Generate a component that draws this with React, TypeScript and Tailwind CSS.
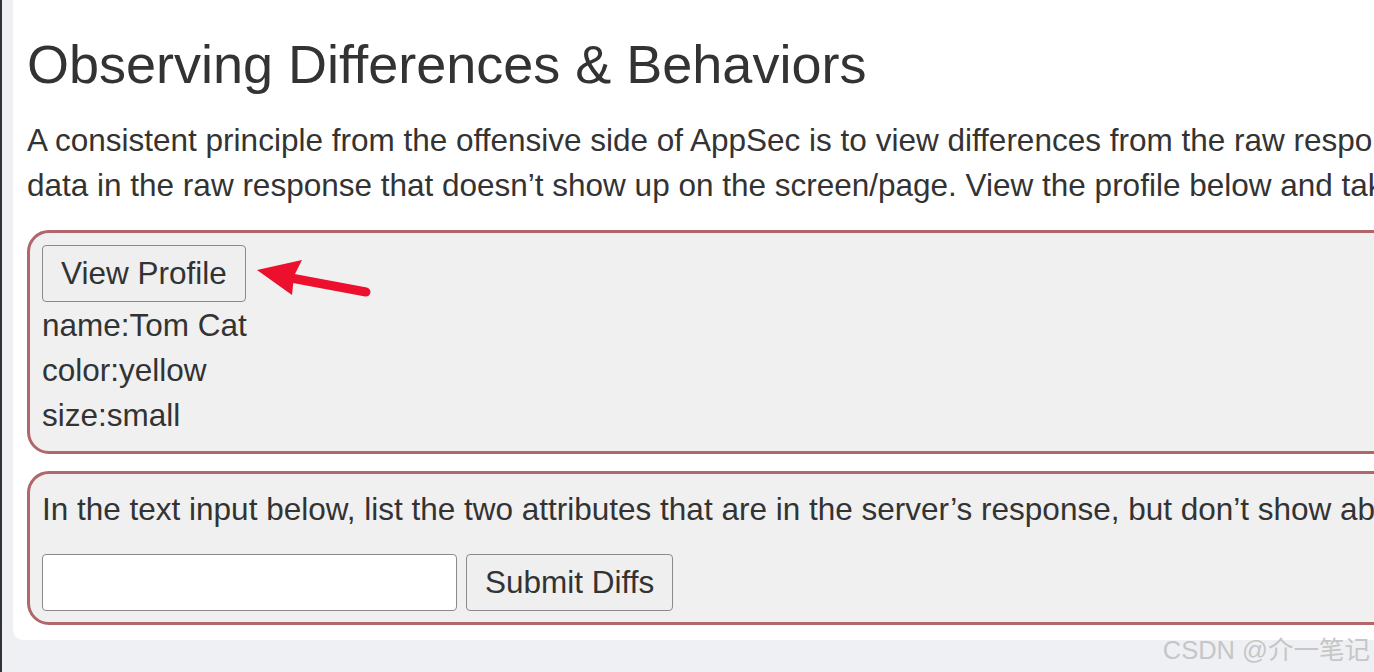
import React from "react";

export default function App() {
  return (
    <div
      className="relative flex h-[672px] w-[1374px] overflow-hidden bg-[#eff0f4] text-[#333333]"
      style={{ fontFamily: '"Liberation Sans", Arial, sans-serif' }}
    >
      <div className="w-[2px] shrink-0 bg-[#2f333b]" />
      <div className="w-[11px] shrink-0" />
      <div className="self-start w-[1440px] shrink-0 rounded-b-[10px] bg-white pl-[14px] pb-[15px]">
        <h3 className="mt-[35px] mb-[24px] text-[54px] leading-[59.4px] font-normal">
          Observing Differences &amp; Behaviors
        </h3>
        <p className="mb-[22px] text-[31.5px] leading-[45px] whitespace-nowrap">
          A consistent principle from the offensive side of AppSec is to view differences from the raw response and what is shown on the screen.
          <br />
          data in the raw response that doesn’t show up on the screen/page. View the profile below and take note of the differences.
        </p>

        <div className="relative rounded-[22px] border-[3px] border-[#b0666b] bg-[#f0f0f0] pt-[12px] pb-[13px] pl-[12px]">
          <button className="h-[57px] rounded-[4px] border border-[#8a8a8a] bg-[#efefef] px-[18px] text-[31.5px] leading-[45px] text-[#333333]">
            View Profile
          </button>
          <div className="mt-[1px] text-[31.5px] leading-[45px]">
            <div>name:Tom Cat</div>
            <div>color:yellow</div>
            <div>size:small</div>
          </div>
          <svg
            className="absolute left-[225px] top-[24px]"
            width="120"
            height="42"
            viewBox="0 0 120 42"
          >
            <line x1="36" y1="21" x2="111" y2="35" stroke="#ec0f2e" strokeWidth="9" strokeLinecap="round" />
            <polygon points="2,13 47,3 39,19 37,38" fill="#ec0f2e" />
          </svg>
        </div>

        <div className="mt-[17px] rounded-[22px] border-[3px] border-[#b0666b] bg-[#f0f0f0] pt-[13px] pb-[11px] pl-[12px]">
          <p className="mb-[22px] text-[31.5px] leading-[45px] whitespace-nowrap">
            In the text input below, list the two attributes that are in the server’s response, but don’t show above in the profile.
          </p>
          <div className="flex items-center gap-[9px]">
            <input
              type="text"
              className="h-[57px] w-[415px] rounded-[4px] border border-[#8a8a8a] bg-white px-2 text-[31.5px]"
            />
            <button className="h-[57px] rounded-[4px] border border-[#8a8a8a] bg-[#efefef] px-[18px] text-[31.5px] leading-[45px] text-[#333333]">
              Submit Diffs
            </button>
          </div>
        </div>
      </div>

      <div
        className="absolute right-[4px] bottom-[7px] text-[25.5px] leading-[30px] text-[#c6c6c6]"
        style={{ fontFamily: '"Liberation Sans", "Noto Sans CJK SC", sans-serif' }}
      >
        CSDN @介一笔记
      </div>
    </div>
  );
}
